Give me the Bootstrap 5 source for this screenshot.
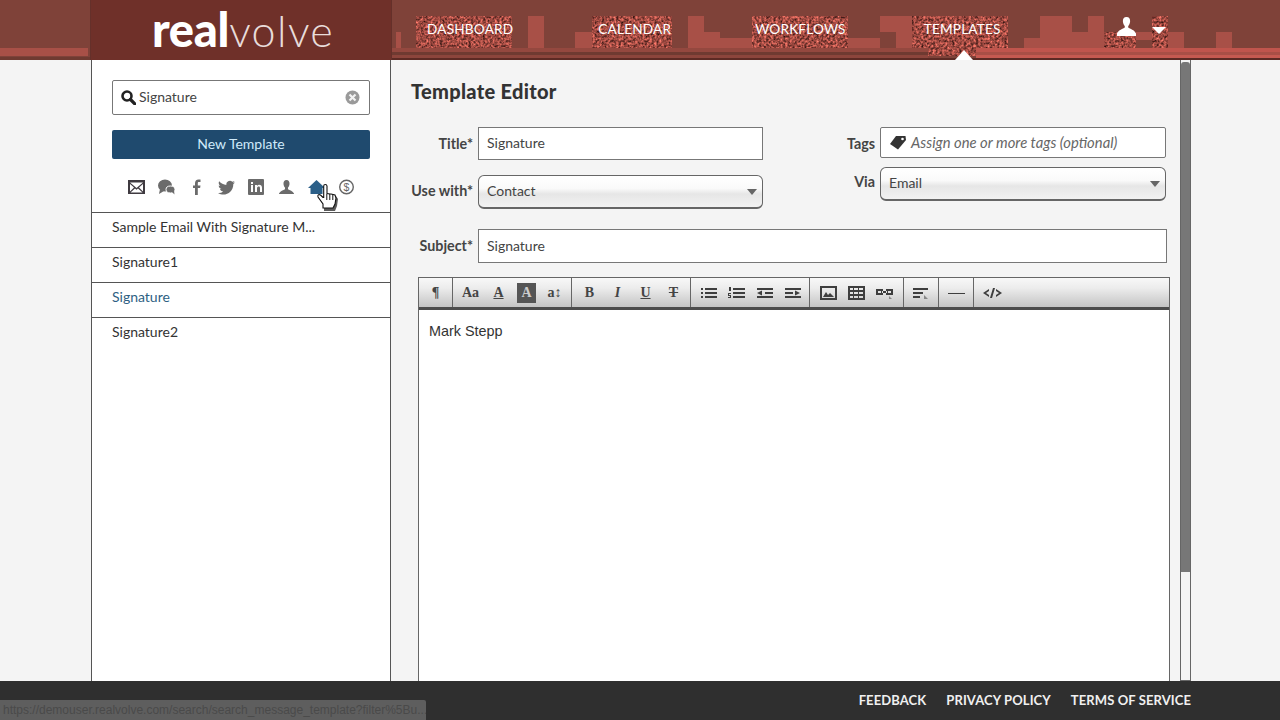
<!DOCTYPE html>
<html lang="en">
<head>
  <meta charset="UTF-8">
  <meta name="viewport" content="width=device-width, initial-scale=1.0">
  <title>Realvolve - Template Editor</title>
  <link href="https://cdn.jsdelivr.net/npm/bootstrap@5.3.3/dist/css/bootstrap.min.css" rel="stylesheet">
  <style>
    html, body { height: 100%; }
    body {
      background: #f4f4f4;
      color: #333;
      font-family: "Lato", "Liberation Sans", sans-serif;
      font-size: 14px;
      overflow: hidden;
    }
    .rv-page { height: 720px; }
    .rv-top { height: 60px; background: #7f4239; position: relative; flex: none; }
    .rv-deco { position: absolute; left: 0; top: 0; }
    .rv-logo {
      width: 302px; margin-left: 90px; height: 60px; background: #6f3029;
      position: relative; color: #fff; font-size: 43px; line-height: 58px;
      border-left: 1px solid #65302a; border-right: 1px solid #65302a;
      padding-left: 61px; white-space: nowrap;
    }
    .rv-logo b { font-weight: 900; font-size: 47px; letter-spacing: -.3px; }
    .rv-logo span { font-weight: 300; color: #e8dcda; letter-spacing: 1.4px; }
    .rv-nav { position: relative; padding-left: 35px; gap: 84px; height: 58px; }
    .rv-nav a { color: #fff; text-decoration: none; font-size: 13.6px; line-height: 58px; font-weight: 400; letter-spacing: .2px; }
    .rv-nav a:nth-child(2) { margin-left: 1px; }
    .rv-nav a:last-child { margin-left: -6px; }
    .rv-user { position: absolute; left: 1117px; top: 17px; }
    .rv-caret { position: absolute; left: 1152px; top: 27px; }
    .rv-notch { position: absolute; left: 955px; top: 50px; }
    .rv-body { min-height: 0; }
    .rv-side {
      width: 300px; margin-left: 91px; background: #fff; flex: none;
      border-left: 1px solid #555; border-right: 1px solid #555;
    }
    .rv-search { margin: 20px 20px 0; height: 35px; border: 1px solid #777; border-radius: 2px; padding: 0 9px 0 8px; }
    .rv-search input { border: 0; outline: 0; flex: 1; min-width: 0; padding: 0 0 2px 3px; color: #444; font: inherit; background: transparent; }
    .rv-new {
      display: block; width: 258px; height: 29px; margin: 15px 20px 0; padding: 0 0 2px;
      background: #1f4a6e; border: 0; border-radius: 2px; color: #cfeafa; font-size: 14px;
    }
    .rv-new:hover { background: #1f4a6e; color: #cfeafa; }
    .rv-icons { height: 53px; padding: 20px 0 0 36px; gap: 13px; position: relative; }
    .rv-icons svg { display: block; width: 17px; height: 16px; fill: #6b6b6b; }
    .rv-icons .rv-home { fill: #2b5f88; }
    .rv-icons .rv-hand { position: absolute; left: 222px; top: 23px; width: 24px; height: 30px; fill: #fff; }
    .rv-list .list-group-item { height: 35px; padding: 5px 20px; border-color: #555; color: #333; font-size: 14px; line-height: 18px; background: #fff; }
    .rv-list .list-group-item:first-child { border-top: 1px solid #555; height: 36px; }
    .rv-list .list-group-item:last-child { border-bottom: 0; }
    .rv-list .rv-on { color: #2e5f83; }
    .rv-main { padding: 0 0 0 20px; position: relative; min-width: 0; }
    .rv-main h1 { font-size: 20px; font-weight: 900; color: #333; margin: 21px 0 0; line-height: 21px; letter-spacing: .3px; }
    .rv-lbl { font-weight: 700; font-size: 14.3px; color: #444; text-align: right; flex: none; margin: 0 5px 0 0; white-space: nowrap; }
    .rv-lbl-up { padding-bottom: 4px; }
    .rv-lbl-up2 { padding-bottom: 2px; }
    .rv-lbl-dn { padding-top: 2px; }
    .rv-field { height: 33px; border: 1px solid #777; background: #fff; border-radius: 0; padding: 0 8px 2px; font-size: 14px; color: #444; box-shadow: none; }
    .rv-field:focus { border-color: #777; box-shadow: none; }
    .rv-drop {
      height: 34px; border: 1px solid #666; border-bottom-width: 2px; border-radius: 6px; padding: 0 8px 2px; color: #444; font-size: 14px;
      background-color: #f0f0f0;
      background-image: url("data:image/svg+xml,%3Csvg xmlns='http://www.w3.org/2000/svg' width='10' height='6'%3E%3Cpath fill='%23666' d='M0 0h10L5 6z'/%3E%3C/svg%3E"), linear-gradient(#fff 0, #fafafa 40%, #e6e6e6 58%, #f2f2f2 100%);
      background-repeat: no-repeat; background-position: right 5px center, 0 0; background-size: 10px 6px, 100% 100%;
    }
    .rv-tag { height: 31px; border: 1px solid #777; border-radius: 2px; background: #fff; padding-left: 8px; color: #666; font-style: italic; font-size: 14.8px; white-space: nowrap; }
    .rv-left { width: 352px; }
    .rv-right { width: 323px; margin-left: 80px; }
    .rv-wys { width: 752px; margin-left: 7px; height: 405px; border: 1px solid #666; border-bottom: 0; background: #fff; }
    .rv-bar { height: 32px; background: linear-gradient(#f8f8f8 0, #ececec 35%, #c4c4c4 100%); border-bottom: 3px solid #4c4c4c; }
    .rv-grp { height: 29px; padding: 0 7px 0 8px; gap: 9px; border-right: 1px solid #666; }
    .rv-grp:first-child { padding: 0 7px; }
    .rv-grp-w { padding: 0 9px; }
    .rv-grp-s { padding: 0 7px 0 8px; }
    .rv-grp:last-child { border-right: 0; padding-left: 9px; }
    .rv-btn { width: 19px; text-align: center; font: 700 14px/29px "Liberation Serif", serif; color: #444; }
    .rv-btn-box { background: #555; color: #ccc; line-height: 20px; height: 20px; margin-top: 5px; }
    .rv-bar svg { display: block; width: 19px; height: 14px; fill: #3e3e3e; }
    .rv-text { padding: 12px 10px; font: 14.4px/18px "Liberation Sans", Arial, sans-serif; color: #333; }
    .rv-scroll { position: absolute; left: 789px; top: 0; width: 11px; height: 621px; border: 1px solid #666; border-top: 0; }
    .rv-thumb { height: 510px; margin-top: 2px; background: #777; border-radius: 3px 3px 0 0; }
    .rv-foot { height: 39px; background: #2f2f2f; flex: none; padding-right: 89px; gap: 20px; position: relative; }
    .rv-foot a { color: #f0f0f0; font-size: 13px; font-weight: 700; text-decoration: none; letter-spacing: .1px; }
    .rv-status {
      position: absolute; left: 0; bottom: 0; width: 426px; height: 20px; padding: 0 3px;
      background: #5e5e5e; color: #4a4a4a; font: 12px/20px "Liberation Sans", Arial, sans-serif;
      white-space: nowrap; overflow: hidden; border-top-right-radius: 2px;
    }
  </style>
</head>
<body>
<div class="rv-page d-flex flex-column">
  <header class="rv-top d-flex">
    <svg class="rv-deco" width="1280" height="60" aria-hidden="true">
      <defs>
        <filter id="rvNoise" x="0" y="0" width="100%" height="100%" color-interpolation-filters="sRGB">
          <feTurbulence type="fractalNoise" baseFrequency="0.42" numOctaves="2" seed="4"/>
          <feColorMatrix type="matrix" values="1.25 0 0 0 0  0.62 0 0 0 -0.02  0.55 0 0 0 -0.02  0 0 0 0 1"/>
        </filter>
      </defs>
      <g fill="#a85047">
        <rect x="0" y="48" width="88" height="8"/>
        <rect x="392" y="49" width="30" height="9"/>
        <rect x="396" y="32" width="5" height="17"/>
        <rect x="528" y="16" width="16" height="32"/>
        <rect x="575" y="32" width="17" height="16"/>
        <rect x="688" y="16" width="16" height="32"/>
        <rect x="704" y="32" width="16" height="16"/>
        <rect x="720" y="38" width="32" height="10"/>
        <rect x="848" y="38" width="32" height="10"/>
        <rect x="880" y="16" width="32" height="16"/>
        <rect x="896" y="32" width="16" height="16"/>
        <rect x="1024" y="38" width="16" height="10"/>
        <rect x="1040" y="16" width="32" height="32"/>
        <rect x="1072" y="32" width="16" height="16"/>
        <rect x="1088" y="16" width="16" height="32"/>
        <rect x="1136" y="32" width="16" height="8"/>
        <rect x="1168" y="32" width="16" height="16"/>
        <rect x="1216" y="32" width="16" height="16"/>
      </g>
      <rect x="392" y="48" width="536" height="4" fill="#94483f"/>
      <rect x="392" y="52" width="536" height="3" fill="#6f3a31"/>
      <rect x="392" y="55" width="536" height="3" fill="#8c453c"/>
      <rect x="392" y="58" width="888" height="2" fill="#5c2a24"/>
      <rect x="976" y="48" width="304" height="4" fill="#c0554d"/>
      <rect x="976" y="52" width="304" height="3" fill="#a94f46"/>
      <rect x="976" y="55" width="304" height="3" fill="#c65a51"/>
      <rect x="0" y="57" width="90" height="3" fill="#6f3a31"/>
      <rect x="416" y="16" width="96" height="32" filter="url(#rvNoise)"/>
      <rect x="592" y="16" width="80" height="32" filter="url(#rvNoise)"/>
      <rect x="752" y="16" width="96" height="32" filter="url(#rvNoise)"/>
      <rect x="912" y="16" width="96" height="32" filter="url(#rvNoise)"/>
      <rect x="1104" y="32" width="32" height="16" filter="url(#rvNoise)"/>
      <rect x="1152" y="16" width="16" height="32" filter="url(#rvNoise)"/>
      <rect x="928" y="48" width="48" height="8" filter="url(#rvNoise)"/>
    </svg>
    <div class="rv-logo"><b>real</b><span>volve</span></div>
    <nav class="rv-nav d-flex">
      <a href="#">DASHBOARD</a>
      <a href="#">CALENDAR</a>
      <a href="#">WORKFLOWS</a>
      <a href="#">TEMPLATES</a>
    </nav>
    <svg class="rv-user" width="19" height="19" viewBox="0 0 19 19" fill="#fff" aria-hidden="true"><path d="M9.500 0C6.800 0 5.700 2 5.900 4.600c.1 1.900.9 3.500 1.900 4.500v1.500C6 12 1.500 13 0 16.500V19h19v-2.500c-1.500-3.500-6-4.500-7.800-5.900V9.100c1-1 1.800-2.600 1.900-4.500C13.300 2 12.200 0 9.500 0z"/></svg>
    <svg class="rv-caret" width="14" height="7" viewBox="0 0 14 7" fill="#fff" aria-hidden="true"><path d="M0 0h14L7 7z"/></svg>
    <svg class="rv-notch" width="18" height="10" viewBox="0 0 18 10" fill="#fff" aria-hidden="true"><path d="M0 10 9 0l9 10z"/></svg>
  </header>

  <div class="rv-body d-flex flex-grow-1">
    <aside class="rv-side">
      <div class="rv-search d-flex align-items-center">
        <svg width="15" height="15" viewBox="0 0 15 15" aria-hidden="true"><circle cx="6" cy="6" r="4.500" fill="none" stroke="#222" stroke-width="2.600"/><path d="m9.500 9.500 4.300 4.300" stroke="#222" stroke-width="3.200" stroke-linecap="round"/></svg>
        <input type="text" value="Signature">
        <svg width="15" height="15" viewBox="0 0 15 15" aria-hidden="true"><circle cx="7.500" cy="7.500" r="7" fill="#9a9a9a"/><path d="m4.500 4.500 6 6m0-6-6 6" stroke="#f2f2f2" stroke-width="2.200"/></svg>
      </div>
      <button type="button" class="btn rv-new">New Template</button>
      <div class="rv-icons d-flex">
        <svg viewBox="0 0 17 16" aria-hidden="true"><rect y="1" width="17" height="14" fill="#3f3a40"/><path d="M2 3.500h13L8.500 9zM2 5l4 3.500L2 12.500zm13 0v7.500l-4-4zM2.500 13.500l4.500-4 1.500 1.200L10 9.500l4.500 4z" fill="#fff"/></svg>
        <svg viewBox="0 0 17 16" aria-hidden="true"><ellipse cx="7" cy="6.500" rx="7" ry="6"/><path d="M2 10 1 15l5-3z"/><ellipse cx="12.500" cy="10.500" rx="4.500" ry="3.500" stroke="#fff"/><path d="m14 13 2.500 2.500-.5-4z"/></svg>
        <svg viewBox="0 0 17 16" aria-hidden="true"><path d="M7 16V9H5V6.500h2V4.300C7 2 8.300.5 10.500.5H12.500V3H11c-1 0-1.200.5-1.200 1.300v2.200h2.700L12.100 9H9.800v7z"/></svg>
        <svg viewBox="0 0 17 16" aria-hidden="true"><path d="M17 3.200c-.6.300-1.300.5-2 .6.700-.4 1.300-1.100 1.500-1.900-.7.400-1.400.7-2.200.9A3.500 3.500 0 0 0 8.400 6C5.500 5.800 3 4.400 1.200 2.300c-.9 1.600-.5 3.600 1.100 4.700-.6 0-1.100-.2-1.600-.4 0 1.700 1.200 3.100 2.800 3.500-.5.100-1 .1-1.600 0 .5 1.400 1.700 2.400 3.300 2.400A7 7 0 0 1 0 14c6.900 4 15.400-.4 15.300-9 .7-.5 1.300-1.100 1.700-1.800z"/></svg>
        <svg viewBox="0 0 17 16" aria-hidden="true"><rect width="16" height="16" rx="1"/><path d="M3 6h2v7H3zM3 3h2v2H3zM7 6h2v1c.5-.8 1.300-1.200 2.200-1.200 1.700 0 2.800 1 2.800 3V13h-2V9.200c0-1-.4-1.600-1.300-1.600S9 8.300 9 9.200V13H7z" fill="#fff"/></svg>
        <svg viewBox="0 0 17 16" aria-hidden="true"><path d="M8.500 1C6.300 1 5.300 2.800 5.500 5c.1 1.500.7 2.800 1.500 3.600v1.600C5.500 11.300 2 12 1 14.500V15h15v-.5c-1-2.500-4.500-3.200-6-4.300V8.600c.8-.8 1.400-2.100 1.500-3.600.2-2.200-.8-4-3-4z"/></svg>
        <svg class="rv-home" viewBox="0 0 17 16" aria-hidden="true"><path d="M8.500 1 0 9h2.500v6h12V9H17z"/></svg>
        <svg viewBox="0 0 17 16" aria-hidden="true"><circle cx="8.500" cy="8" r="6.800" fill="none" stroke="#666" stroke-width="1.400"/><text x="8.500" y="11.800" text-anchor="middle" font-size="10.500" font-family="Liberation Sans" fill="#666">$</text></svg>
        <svg class="rv-hand" viewBox="0 0 24 30" aria-hidden="true"><path d="M9 28h11l2-5 1-7-2-3-5-1-1-1-3-.5V4C12 2 9 2 9 4v11l-2-2c-2-1.500-4-.5-3.500 1.500L9 23z" fill="#5a5a5a" transform="translate(1 1)"/><path d="M9 26h10l2-4 1-6-1-3-4-1h-1l-3-.5V4C12.800 2 9.700 2 9.700 4v11.500H9l-2.500-2.500c-2-1-3 0-2.500 2l5 7z" stroke="#111" stroke-width="1.100"/><path d="M12.800 12v6m3-6v6m3-5.500V18" stroke="#111" stroke-width="1"/></svg>
      </div>
      <div class="list-group list-group-flush rv-list">
        <a href="#" class="list-group-item">Sample Email With Signature M...</a>
        <a href="#" class="list-group-item">Signature1</a>
        <a href="#" class="list-group-item rv-on">Signature</a>
        <a href="#" class="list-group-item">Signature2</a>
      </div>
    </aside>

    <main class="rv-main flex-grow-1">
      <h1>Template Editor</h1>
      <div class="d-flex" style="margin-top:25px">
        <div class="rv-left">
          <div class="d-flex align-items-center">
            <label class="rv-lbl" style="width:62px">Title*</label>
            <input class="form-control rv-field flex-grow-1" value="Signature">
          </div>
          <div class="d-flex align-items-center" style="margin-top:15px">
            <label class="rv-lbl rv-lbl-up2" style="width:62px">Use with*</label>
            <select class="form-select rv-drop flex-grow-1"><option>Contact</option></select>
          </div>
        </div>
        <div class="rv-right">
          <div class="d-flex align-items-center">
            <label class="rv-lbl rv-lbl-dn" style="width:32px">Tags</label>
            <div class="rv-tag d-flex align-items-center flex-grow-1 gap-1">
              <svg width="18" height="15" viewBox="0 0 18 15" aria-hidden="true"><path fill="#333" d="M7 1h9.500L17 5l-8 9.500-8-5.500z"/><circle cx="13.500" cy="4" r="1.300" fill="#fff"/></svg>
              <span>Assign one or more tags (optional)</span>
            </div>
          </div>
          <div class="d-flex align-items-center" style="margin-top:9px">
            <label class="rv-lbl rv-lbl-up" style="width:32px">Via</label>
            <select class="form-select rv-drop flex-grow-1"><option>Email</option></select>
          </div>
        </div>
      </div>
      <div class="d-flex align-items-center" style="margin-top:20px;width:756px">
        <label class="rv-lbl" style="width:62px">Subject*</label>
        <input class="form-control rv-field flex-grow-1" style="height:34px" value="Signature">
      </div>
      <div class="rv-wys" style="margin-top:14px">
        <div class="rv-bar d-flex">
          <div class="rv-grp d-flex"><span class="rv-btn">¶</span></div>
          <div class="rv-grp d-flex">
            <span class="rv-btn">Aa</span>
            <span class="rv-btn text-decoration-underline">A</span>
            <span class="rv-btn rv-btn-box">A</span>
            <span class="rv-btn">a↕</span>
          </div>
          <div class="rv-grp d-flex">
            <span class="rv-btn">B</span>
            <span class="rv-btn fst-italic">I</span>
            <span class="rv-btn text-decoration-underline">U</span>
            <span class="rv-btn text-decoration-line-through">T</span>
          </div>
          <div class="rv-grp d-flex align-items-center">
            <svg viewBox="0 0 19 14" aria-hidden="true"><path d="M2 2h2v2H2zm4 0h12v2H6zM2 6h2v2H2zm4 0h12v2H6zm-4 4h2v2H2zm4 0h12v2H6z"/></svg>
            <svg viewBox="0 0 19 14" aria-hidden="true"><path d="M2 1h2v4H2zm4 1h12v2H6zM1 7h3v1H2v1h2v3H1v-1h2v-1H1zm5-1h12v2H6zm0 4h12v2H6z"/></svg>
            <svg viewBox="0 0 19 14" aria-hidden="true"><path d="M2 2h16v2H2zm8 4h8v2h-8zm-8 4h16v2H2zM7 4.500v5L2 7z"/></svg>
            <svg viewBox="0 0 19 14" aria-hidden="true"><path d="M2 2h16v2H2zm0 4h8v2H2zm0 4h16v2H2zM12 4.500v5L17 7z"/></svg>
          </div>
          <div class="rv-grp rv-grp-w d-flex align-items-center">
            <svg viewBox="0 0 19 14" aria-hidden="true"><path fill-rule="evenodd" d="M1 0h17v14H1zm2 2v10h13V2z"/><path d="m4 11 3-5 2 3 2-2 4 4z"/></svg>
            <svg viewBox="0 0 19 14" aria-hidden="true"><path fill-rule="evenodd" d="M1 0h17v14H1zm2 2v2h3V2zm4 0v2h4V2zm5 0v2h4V2zM3 6v2h3V6zm4 0v2h4V6zm5 0v2h4V6zM3 10v2h3v-2zm4 0v2h4v-2zm5 0v2h4v-2z"/></svg>
            <svg viewBox="0 0 19 14" aria-hidden="true"><path fill-rule="evenodd" d="M1 3h7v6H1zm2 2v2h3V5zm8-2h7v6h-7zm2 2v2h3V5zM7 5h5v2H7z"/><path d="m14 10 3 3h-3z" fill="#888"/></svg>
          </div>
          <div class="rv-grp rv-grp-s d-flex align-items-center">
            <svg viewBox="0 0 19 14" aria-hidden="true"><path d="M1 2h15v2H1zm0 4h10v2H1zm0 4h7v2H1z"/><path d="m12 9 4 4h-4z" fill="#888"/></svg>
          </div>
          <div class="rv-grp rv-grp-s d-flex align-items-center">
            <svg viewBox="0 0 19 14" aria-hidden="true"><path d="M1 7h17v1H1z"/></svg>
          </div>
          <div class="rv-grp d-flex align-items-center">
            <svg viewBox="0 0 19 14" aria-hidden="true"><path d="M6 3v2L3 7l3 2v2L0 7zm7 0v2l3 2-3 2v2l6-4zM10 2h2L9 12H7z"/></svg>
          </div>
        </div>
        <div class="rv-text">Mark Stepp</div>
      </div>
      <div class="rv-scroll"><div class="rv-thumb"></div></div>
    </main>
  </div>

  <footer class="rv-foot d-flex align-items-center justify-content-end">
    <a href="#">FEEDBACK</a>
    <a href="#">PRIVACY POLICY</a>
    <a href="#">TERMS OF SERVICE</a>
    <div class="rv-status">https://demouser.realvolve.com/search/search_message_template?filter%5Bu...</div>
  </footer>
</div>
<script src="https://cdn.jsdelivr.net/npm/bootstrap@5.3.3/dist/js/bootstrap.bundle.min.js"></script>
</body>
</html>
